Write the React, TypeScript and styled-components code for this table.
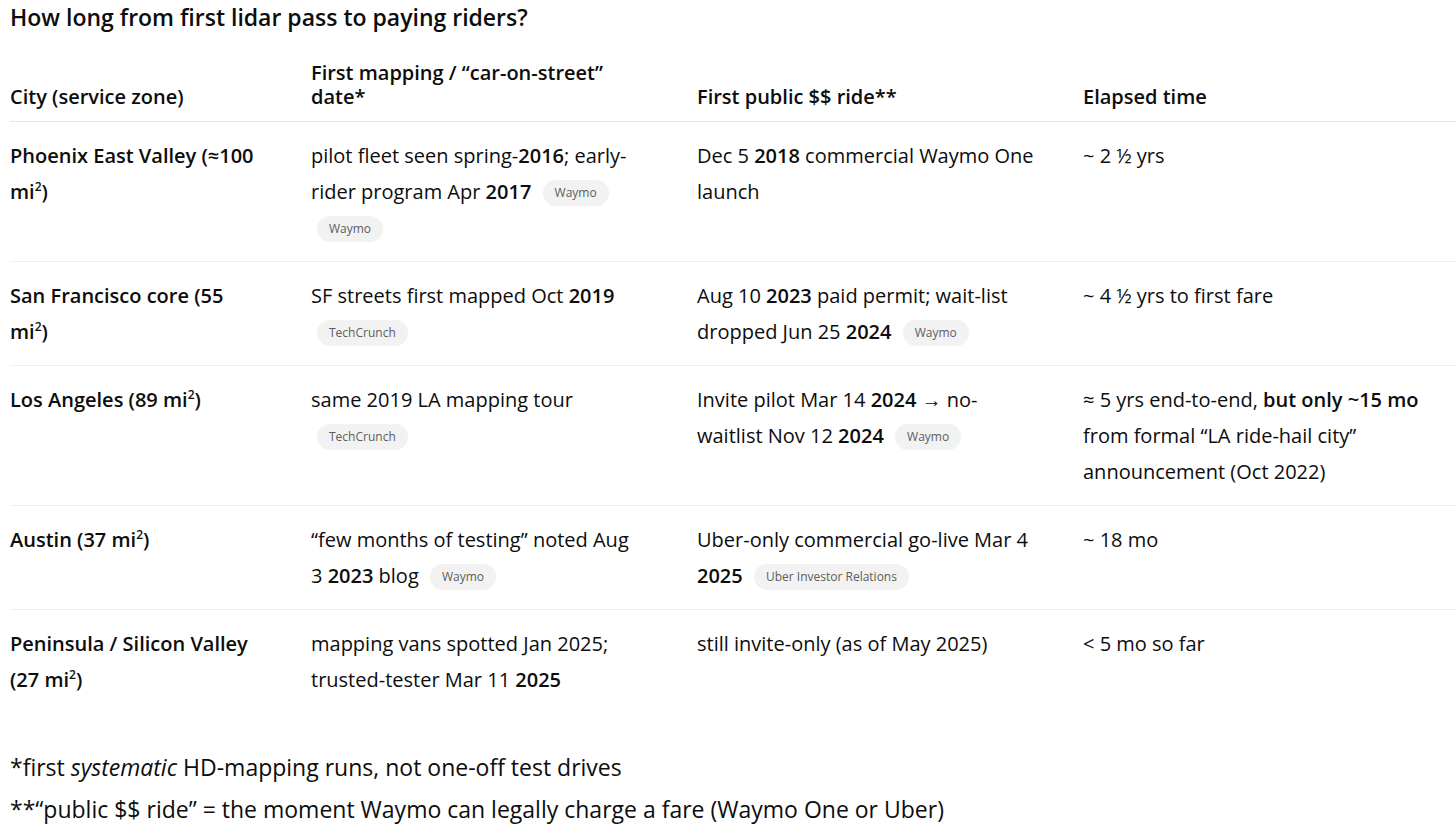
import React from 'react';
import styled, { createGlobalStyle } from 'styled-components';

const GlobalStyle = createGlobalStyle`
  html, body {
    margin: 0;
    padding: 0;
    background: #ffffff;
    overflow-x: hidden;
  }
  body {
    font-family: "Open Sans", "Noto Sans", "Liberation Sans", sans-serif;
    color: #0d0d0d;
  }
`;

const Page = styled.div`
  padding: 2px 0 0 10px;
  width: 1480px;
`;

const Title = styled.h3`
  margin: 0;
  font-size: 23px;
  line-height: 30px;
  font-weight: 600;
`;

// column widths and the room each column leaves on its right
const COLS = [
  { w: 301, pr: 51 },
  { w: 386, pr: 61 },
  { w: 386, pr: 46 },
  { w: 386, pr: 16 },
];

const Table = styled.table`
  margin-top: 17px;
  border-collapse: collapse;
  table-layout: fixed;
  width: 1459px;
  font-size: 20px;

  ${COLS.map(
    (c, i) => `
    th:nth-child(${i + 1}), td:nth-child(${i + 1}) {
      padding-right: ${c.pr}px;
    }
    th:nth-child(${i + 1}) { width: ${c.w}px; }
  `
  ).join('')}
`;

const HeadCell = styled.th`
  box-sizing: border-box;
  text-align: left;
  vertical-align: bottom;
  font-weight: 600;
  line-height: 24px;
  padding-top: 12px;
  padding-bottom: 12px;
  padding-left: 0;
  border-bottom: 1px solid #e3e3e3;
`;

const Row = styled.tr<{ $last?: boolean }>`
  border-bottom: ${p => (p.$last ? 'none' : '1px solid #efefef')};
`;

const Cell = styled.td<{ $city?: boolean }>`
  vertical-align: top;
  line-height: 36px;
  padding-top: 16px;
  padding-bottom: 15px;
  padding-left: 0;
  font-weight: ${p => (p.$city ? 600 : 400)};
`;

const B = styled.strong`
  font-weight: 600;
`;

const Sup = styled.sup`
  font-size: 0.6em;
  line-height: 0;
  vertical-align: baseline;
  position: relative;
  top: -0.7em;
`;

const Pill = styled.span`
  display: inline-block;
  margin-left: 6px;
  padding: 0 12px;
  height: 26px;
  line-height: 26px;
  border-radius: 13px;
  background: #f2f2f2;
  color: #5d5d5d;
  font-size: 12px;
  font-weight: 400;
  vertical-align: 2px;
  white-space: nowrap;
`;

const Notes = styled.div`
  margin-top: 36px;
  font-size: 23px;
  line-height: 36px;
`;

const Note = styled.p`
  margin: 0 0 6px;
`;

const Mi = () => (
  <>
    mi<Sup>2</Sup>
  </>
);

export default function App() {
  return (
    <>
      <GlobalStyle />
      <Page>
        <Title>How long from first lidar pass to paying riders?</Title>
        <Table>
          <thead>
            <tr>
              <HeadCell>City (service zone)</HeadCell>
              <HeadCell>First mapping / “car-on-street” date*</HeadCell>
              <HeadCell>First public $$ ride**</HeadCell>
              <HeadCell>Elapsed time</HeadCell>
            </tr>
          </thead>
          <tbody>
            <Row>
              <Cell $city>
                Phoenix East Valley (≈100 <Mi />)
              </Cell>
              <Cell>
                pilot fleet seen spring-<B>2016</B>; early-rider program Apr <B>2017</B> <Pill>Waymo</Pill> <Pill>Waymo</Pill>
              </Cell>
              <Cell>
                Dec 5 <B>2018</B> commercial Waymo One launch
              </Cell>
              <Cell>~ 2 ½ yrs</Cell>
            </Row>
            <Row>
              <Cell $city>
                San Francisco core (55 <Mi />)
              </Cell>
              <Cell>
                SF streets first mapped Oct <B>2019</B> <Pill>TechCrunch</Pill>
              </Cell>
              <Cell>
                Aug 10 <B>2023</B> paid permit; wait-list dropped Jun 25 <B>2024</B> <Pill>Waymo</Pill>
              </Cell>
              <Cell>~ 4 ½ yrs to first fare</Cell>
            </Row>
            <Row>
              <Cell $city>
                Los Angeles (89 <Mi />)
              </Cell>
              <Cell>
                same 2019 LA mapping tour <Pill>TechCrunch</Pill>
              </Cell>
              <Cell>
                Invite pilot Mar 14 <B>2024</B> → no-waitlist Nov 12 <B>2024</B> <Pill>Waymo</Pill>
              </Cell>
              <Cell>
                ≈ 5 yrs end-to-end, <B>but only ~15 mo</B> from formal “LA ride-hail city” announcement (Oct 2022)
              </Cell>
            </Row>
            <Row>
              <Cell $city>
                Austin (37 <Mi />)
              </Cell>
              <Cell>
                “few months of testing” noted Aug 3 <B>2023</B> blog <Pill>Waymo</Pill>
              </Cell>
              <Cell>
                Uber-only commercial go-live Mar 4 <B>2025</B> <Pill>Uber Investor Relations</Pill>
              </Cell>
              <Cell>~ 18 mo</Cell>
            </Row>
            <Row $last>
              <Cell $city>
                Peninsula / Silicon Valley (27 <Mi />)
              </Cell>
              <Cell>
                mapping vans spotted Jan 2025; trusted-tester Mar 11 <B>2025</B>
              </Cell>
              <Cell>still invite-only (as of May 2025)</Cell>
              <Cell>&lt; 5 mo so far</Cell>
            </Row>
          </tbody>
        </Table>
        <Notes>
          <Note>
            *first <em>systematic</em> HD-mapping runs, not one-off test drives
          </Note>
          <Note>**“public $$ ride” = the moment Waymo can legally charge a fare (Waymo One or Uber)</Note>
        </Notes>
      </Page>
    </>
  );
}
